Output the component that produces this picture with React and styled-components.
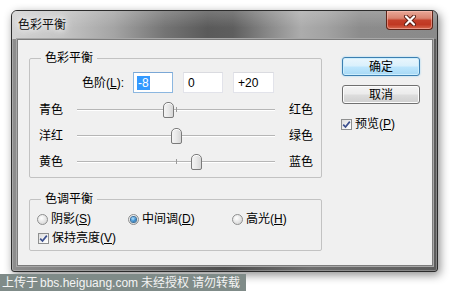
import React from "react";
import styled, { createGlobalStyle } from "styled-components";

const Global = createGlobalStyle`
  html, body { margin: 0; padding: 0; background: #ffffff; }
  body {
    font-family: "Liberation Sans", "Noto Sans CJK SC", sans-serif;
    font-size: 12px;
    color: #000;
  }
  * { box-sizing: border-box; }
`;

const Page = styled.div`
  position: relative;
  width: 455px;
  height: 291px;
  padding: 10px 0 0 11px;
  overflow: hidden;
`;

const Window = styled.div`
  width: 427px;
  height: 262px;
  border: 1px solid #2c2c2c;
  border-radius: 6px 6px 3px 3px;
  background: linear-gradient(90deg, #8e8e8e 0%, #6a6a6a 30%, #4e4e4e 50%, #6e6e6e 70%, #5c5c5c 100%);
  box-shadow: 2px 3px 10px rgba(0, 0, 0, 0.45), inset 0 0 0 1px rgba(255,255,255,0.25);
  display: flex;
  flex-direction: column;
  overflow: hidden;
`;

const TitleBar = styled.div`
  height: 28px;
  flex: none;
  display: flex;
  justify-content: space-between;
  align-items: flex-start;
  padding: 0 4px 0 6px;
  background:
    linear-gradient(180deg, rgba(255,255,255,0.18) 0%, rgba(255,255,255,0) 60%),
    linear-gradient(90deg, #d2d2d2 0%, #c4c4c4 12%, #a4a4a4 24%, #747474 36%, #5a5a5a 46%, #5e5e5e 52%, #878787 60%, #acacac 68%, #a2a2a2 74%, #8c8c8c 82%, #8a8a8a 100%);
`;

const Title = styled.div`
  margin-top: 7px;
  font-size: 12px;
  line-height: 14px;
  color: #111;
  text-shadow: 0 0 6px #fff, 0 0 10px #fff;
`;

const CloseButton = styled.div`
  width: 47px;
  height: 19px;
  border: 1px solid #5f2418;
  border-top: none;
  border-radius: 0 0 4px 4px;
  background: linear-gradient(180deg, #e9a898 0%, #d98470 40%, #c4402a 52%, #c03822 75%, #d6694f 100%);
  box-shadow: inset 0 0 0 1px rgba(255, 200, 190, 0.5);
  display: flex;
  align-items: center;
  justify-content: center;
`;

const Client = styled.div`
  flex: 1;
  margin: 0 4px 5px 5px;
  border: 1px solid #7c7c7c;
  box-shadow: 0 0 0 1px #a8a8a8;
  background: #f0f0f0;
  display: flex;
  padding: 11px 0 0 11px;
  gap: 20px;
`;

const LeftCol = styled.div`
  width: 293px;
  display: flex;
  flex-direction: column;
  gap: 14px;
`;

const Group = styled.fieldset`
  margin: 0;
  padding: 0 0 ${(p) => p.$padBottom}px 0;
  border: 1px solid #c2c2c2;
  border-radius: 2px;
  min-width: 0;
`;

const Legend = styled.legend`
  margin-left: 11px;
  padding: 0 4px;
  font-size: 12px;
  line-height: 14px;
`;

const LevelsRow = styled.div`
  margin-top: 7px;
  display: flex;
  align-items: center;
  gap: 10px;
`;

const LevelsLabel = styled.div`
  width: 94px;
  text-align: right;
  margin-right: -1px;
  line-height: 14px;
`;

const TextBox = styled.div`
  width: ${(p) => p.$w}px;
  height: 21px;
  border: 1px solid ${(p) => (p.$focused ? "#8cb7e0" : "#e2e3ea")};
  border-top-color: ${(p) => (p.$focused ? "#7aa7d6" : "#dadbe0")};
  background: #fff;
  display: flex;
  align-items: center;
  padding-left: 4px;
  line-height: 14px;
`;

const Selected = styled.span`
  background: #3399ff;
  color: #fff;
  padding: 0 1px;
  margin-left: -1px;
`;

const SliderRow = styled.div`
  margin-top: ${(p) => (p.$first ? 4 : 0)}px;
  height: 26px;
  display: grid;
  grid-template-columns: 24px 198px auto;
  column-gap: 14px;
  align-items: center;
  padding-left: 9px;
  white-space: nowrap;
`;

const RowLabel = styled.div`
  line-height: 14px;
`;

const Track = styled.div`
  position: relative;
  height: 1px;
  background: #b6b6b6;
  box-shadow: 0 1px 0 #ffffff;
  margin-top: -2px;
`;

const Tick = styled.div`
  position: absolute;
  left: 99px;
  top: -2px;
  width: 1px;
  height: 5px;
  background: #9a9a9a;
`;

const Thumb = styled.div`
  position: absolute;
  top: -7px;
  width: 11px;
  height: 16px;
  margin-left: -5px;
  border: 1px solid #7a7a7a;
  border-radius: 5px 5px 2px 2px;
  background: linear-gradient(90deg, #f4f4f4 0%, #e8e8e8 50%, #d6d6d6 100%);
  box-shadow: inset 0 1px 0 #ffffff;
`;

const RightCol = styled.div`
  width: 78px;
  padding-top: 6px;
  display: flex;
  flex-direction: column;
  gap: 9px;
`;

const Button = styled.div`
  height: 19px;
  border: 1px solid ${(p) => (p.$default ? "#3c7fb1" : "#707070")};
  border-radius: 3px;
  display: flex;
  align-items: center;
  justify-content: center;
  line-height: 14px;
  background: ${(p) =>
    p.$default
      ? "linear-gradient(180deg, #eaf6fd 0%, #d9f0fc 48%, #bee6fd 52%, #a7d9f5 100%)"
      : "linear-gradient(180deg, #f4f4f4 0%, #ebebeb 48%, #dddddd 52%, #cfcfcf 100%)"};
  box-shadow: ${(p) =>
    p.$default ? "inset 0 0 0 1px #cdeefd, 0 0 2px #8fd0f5" : "inset 0 0 0 1px #fcfcfc"};
`;

const CheckRow = styled.div`
  display: flex;
  align-items: center;
  gap: 3px;
  height: 14px;
  line-height: 14px;
  margin-top: ${(p) => p.$mt || 0}px;
  margin-left: ${(p) => p.$ml || 0}px;
`;

const Box = styled.div`
  width: 11px;
  height: 11px;
  border: 1px solid #8e8f8f;
  background: linear-gradient(135deg, #dcdcdc 0%, #f4f4f4 60%, #ffffff 100%);
  display: flex;
  align-items: center;
  justify-content: center;
  flex: none;
`;

const RadioRow = styled.div`
  margin-top: 6px;
  display: grid;
  grid-template-columns: 91px 104px auto;
  padding-left: 7px;
  height: 14px;
  align-items: center;
`;

const RadioItem = styled.div`
  display: flex;
  align-items: center;
  gap: 3px;
  line-height: 14px;
`;

const RadioCircle = styled.div`
  width: 11px;
  height: 11px;
  border-radius: 50%;
  border: 1px solid #8e8f8f;
  background: radial-gradient(circle at 40% 35%, #ffffff 0%, #e6e6e6 50%, #cfcfcf 100%);
  display: flex;
  align-items: center;
  justify-content: center;
  flex: none;
`;

const RadioDot = styled.div`
  width: 5px;
  height: 5px;
  border-radius: 50%;
  background: radial-gradient(circle at 40% 35%, #b6e3ff 0%, #3a8fd0 55%, #0f4f8a 100%);
  box-shadow: 0 0 0 1px #3a6f9c;
`;

const U = styled.span`
  text-decoration: underline;
  text-underline-offset: 1px;
`;

const Watermark = styled.div`
  position: absolute;
  left: 0;
  bottom: 0;
  width: 246px;
  height: 17px;
  background: #7f8b88;
  color: #f4f4f4;
  display: flex;
  align-items: center;
  padding-left: 2px;
  font-size: 12px;
  line-height: 14px;
  white-space: nowrap;
  overflow: hidden;
`;

const WmPart = styled.span`
  margin-left: ${(p) => p.$ml || 0}px;
`;

function CheckMark() {
  return (
    <svg width="9" height="9" viewBox="0 0 9 9">
      <path d="M1.2 4.6 L3.5 7 L7.8 1.6" fill="none" stroke="#3b4f8e" strokeWidth="1.7" />
    </svg>
  );
}

function Checkbox({ children, ...rest }) {
  return (
    <CheckRow {...rest}>
      <Box>
        <CheckMark />
      </Box>
      <span>{children}</span>
    </CheckRow>
  );
}

function Radio({ checked, children }) {
  return (
    <RadioItem>
      <RadioCircle>{checked && <RadioDot />}</RadioCircle>
      <span>{children}</span>
    </RadioItem>
  );
}

const sliders = [
  { left: "青色", right: "红色", value: -8 },
  { left: "洋红", right: "绿色", value: 0 },
  { left: "黄色", right: "蓝色", value: 20 },
];

function Slider({ value }) {
  const pct = ((value + 100) / 200) * 100;
  return (
    <Track>
      <Tick />
      <Thumb style={{ left: `${pct}%` }} />
    </Track>
  );
}

export default function App() {
  return (
    <>
      <Global />
      <Page>
        <Window>
          <TitleBar>
            <Title>色彩平衡</Title>
            <CloseButton>
              <svg width="14" height="11" viewBox="0 0 14 11">
                <path d="M3 1.5 L11 9.5 M11 1.5 L3 9.5" stroke="#5a1e14" strokeWidth="4" strokeLinecap="round" />
                <path d="M3 1.5 L11 9.5 M11 1.5 L3 9.5" stroke="#ffffff" strokeWidth="2.2" strokeLinecap="round" />
              </svg>
            </CloseButton>
          </TitleBar>
          <Client>
            <LeftCol>
              <Group $padBottom={2}>
                <Legend>色彩平衡</Legend>
                <LevelsRow>
                  <LevelsLabel>
                    色阶(<U>L</U>):
                  </LevelsLabel>
                  <TextBox $w={40} $focused>
                    <Selected>-8</Selected>
                  </TextBox>
                  <TextBox $w={40}>0</TextBox>
                  <TextBox $w={41}>+20</TextBox>
                </LevelsRow>
                {sliders.map((s, i) => (
                  <SliderRow key={s.left} $first={i === 0}>
                    <RowLabel>{s.left}</RowLabel>
                    <Slider value={s.value} />
                    <RowLabel>{s.right}</RowLabel>
                  </SliderRow>
                ))}
              </Group>
              <Group $padBottom={5}>
                <Legend>色调平衡</Legend>
                <RadioRow>
                  <Radio>
                    阴影(<U>S</U>)
                  </Radio>
                  <Radio checked>
                    中间调(<U>D</U>)
                  </Radio>
                  <Radio>
                    高光(<U>H</U>)
                  </Radio>
                </RadioRow>
                <Checkbox $mt={5} $ml={8}>
                  保持亮度(<U>V</U>)
                </Checkbox>
              </Group>
            </LeftCol>
            <RightCol>
              <Button $default>确定</Button>
              <Button>取消</Button>
              <Checkbox $mt={4} $ml={-1}>
                预览(<U>P</U>)
              </Checkbox>
            </RightCol>
          </Client>
        </Window>
        <Watermark>
          <WmPart>上传于</WmPart>
          <WmPart $ml={2}>bbs.heiguang.com</WmPart>
          <WmPart $ml={3}>未经授权</WmPart>
          <WmPart $ml={3}>请勿转载</WmPart>
        </Watermark>
      </Page>
    </>
  );
}
